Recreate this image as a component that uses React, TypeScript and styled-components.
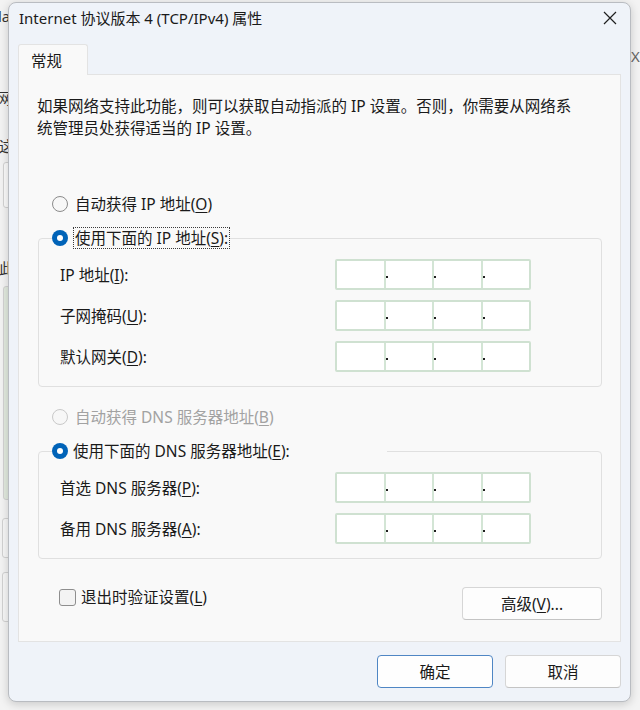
import React from "react";
import styled, { createGlobalStyle, css } from "styled-components";

const Global = createGlobalStyle`
  html, body { margin: 0; padding: 0; }
  body {
    width: 640px;
    height: 710px;
    overflow: hidden;
    background: #e6e6e6;
    font-family: "Noto Sans", "Noto Sans CJK SC", sans-serif;
    color: #1a1a1a;
  }
  * { box-sizing: border-box; }
`;

const Desktop = styled.div`
  position: relative;
  width: 640px;
  height: 710px;
  overflow: hidden;
  background: #ececec;
`;

/* ---------- window behind the dialog (only slivers visible) ---------- */
const BackWindow = styled.div`
  position: absolute;
  left: -400px;
  top: 0;
  width: 1100px;
  height: 710px;
  background: #f3f3f3;
  border-right: 1px solid #cfcfcf;
`;

const BackText = styled.span<{ $x: number; $y: number; $c?: string }>`
  position: absolute;
  left: ${(p) => p.$x}px;
  top: ${(p) => p.$y}px;
  font-size: 15px;
  line-height: 20px;
  color: ${(p) => p.$c ?? "#333"};
  white-space: nowrap;
`;

const BackPanel = styled.div<{ $x: number; $y: number; $w: number; $h: number; $bg: string }>`
  position: absolute;
  left: ${(p) => p.$x}px;
  top: ${(p) => p.$y}px;
  width: ${(p) => p.$w}px;
  height: ${(p) => p.$h}px;
  background: ${(p) => p.$bg};
  border: 1px solid #d2d2d2;
  border-radius: 3px;
`;

/* ---------- dialog ---------- */
const Dialog = styled.div`
  position: absolute;
  left: 8px;
  top: 2px;
  width: 623px;
  height: 700px;
  display: flex;
  flex-direction: column;
  background: #eff3f9;
  border: 1px solid #b9bcc1;
  border-radius: 8px;
  box-shadow: 0 2px 10px rgba(0, 0, 0, 0.18);
`;

const TitleBar = styled.div`
  height: 30px;
  display: flex;
  align-items: center;
  justify-content: space-between;
  padding: 0 13px 0 10px;
`;

const Title = styled.div`
  font-size: 15px;
  line-height: 22px;
  color: #1a1a1a;
`;

const TabStrip = styled.div`
  display: flex;
  margin-top: 11px;
  padding-left: 9px;
`;

const Tab = styled.div`
  position: relative;
  z-index: 1;
  width: 70px;
  height: 31px;
  margin-bottom: -1px;
  padding-left: 12px;
  display: flex;
  align-items: center;
  font-size: 15.5px;
  background: #f9f9f9;
  border: 1px solid #e3e3e3;
  border-bottom: none;
  border-radius: 3px 3px 0 0;
`;

const Panel = styled.div`
  margin: 0 9px;
  padding: 20px 18px 21px 19px;
  display: flex;
  flex-direction: column;
  background: #f9f9f9;
  border: 1px solid #e3e3e3;
`;

const Description = styled.p`
  margin: 0 0 0 -1px;
  font-size: 15.5px;
  line-height: 22px;
`;

const Line = styled.span`
  display: block;
  white-space: nowrap;
`;

const RadioRow = styled.div<{ $top: number }>`
  display: flex;
  align-items: center;
  gap: 7px;
  height: 22px;
  padding-left: 14px;
  margin-top: ${(p) => p.$top}px;
`;

const RadioDot = styled.span<{ $checked?: boolean; $disabled?: boolean }>`
  position: relative;
  flex: none;
  width: 16px;
  height: 16px;
  border-radius: 50%;
  ${(p) =>
    p.$checked
      ? css`
          background: #0063b8;
          &::after {
            content: "";
            position: absolute;
            left: 5px;
            top: 5px;
            width: 6px;
            height: 6px;
            border-radius: 50%;
            background: #fff;
          }
        `
      : css`
          background: #f7f7f7;
          border: 1px solid ${p.$disabled ? "#c9c9c9" : "#8b8b8b"};
        `}
`;

const Label = styled.span<{ $disabled?: boolean; $focused?: boolean }>`
  font-size: 15.5px;
  line-height: 20px;
  white-space: nowrap;
  color: ${(p) => (p.$disabled ? "#a2a2a2" : "#1a1a1a")};
  ${(p) =>
    p.$focused &&
    css`
      border: 1px dotted #3a3a3a;
      padding: 0 1px;
      line-height: 20px;
    `}
`;

const Key = styled.u`
  text-decoration: underline;
  text-underline-offset: 2px;
  text-decoration-thickness: 1px;
`;

const Group = styled.fieldset<{ $top: number }>`
  margin: ${(p) => p.$top}px 0 0 0;
  padding: 10px 0 14px 0;
  border: 1px solid #e0e0e0;
  border-radius: 4px;
  min-width: 0;
`;

const GroupLegend = styled.legend<{ $width: number }>`
  margin-left: 13px;
  padding: 0;
  width: ${(p) => p.$width}px;
  height: 22px;
  display: flex;
  align-items: center;
  gap: 5px;
`;

const FieldGrid = styled.div`
  display: grid;
  grid-template-columns: 275px 196px;
  grid-auto-rows: 31px;
  row-gap: 10px;
  align-items: center;
  padding-left: 21px;
`;

const FieldLabel = styled.span`
  font-size: 15.5px;
  line-height: 20px;
  white-space: nowrap;
`;

const IpField = styled.div`
  width: 196px;
  height: 31px;
  display: flex;
  background: #fff;
  border: 2px solid #cfe1d1;
  border-radius: 2px;
`;

const Octet = styled.div<{ $first?: boolean }>`
  position: relative;
  flex: 1;
  border-left: ${(p) => (p.$first ? "none" : "2px solid #d3e5d5")};
  &::before {
    content: ${(p) => (p.$first ? "none" : '""')};
    position: absolute;
    left: 0;
    top: 15px;
    width: 2px;
    height: 2px;
    background: #1f1f1f;
  }
`;

const BottomRow = styled.div`
  margin-top: 27px;
  padding-left: 21px;
  display: flex;
  align-items: flex-start;
  justify-content: space-between;
`;

const CheckRow = styled.label`
  display: flex;
  align-items: center;
  gap: 5px;
  height: 22px;
`;

const CheckBox = styled.span`
  flex: none;
  width: 17px;
  height: 17px;
  border: 1px solid #8e8e8e;
  border-radius: 3px;
  background: #f3f3f3;
`;

const Button = styled.button<{ $w: number; $default?: boolean }>`
  width: ${(p) => p.$w}px;
  height: 33px;
  margin-top: 1px;
  font-family: inherit;
  font-size: 15.5px;
  color: #1a1a1a;
  background: #fdfdfd;
  border: 1px solid #d6d6d6;
  border-bottom-color: #c4c4c4;
  border-radius: 4px;
  padding: 0;
  ${(p) =>
    p.$default &&
    css`
      border: 1px solid #4f86c4;
      background: #fefefe;
    `}
`;

const Footer = styled.div`
  display: flex;
  justify-content: flex-end;
  gap: 12px;
  padding: 12px 9px 0 0;
`;

const CloseIcon = () => (
  <svg width="14" height="14" viewBox="0 0 14 14" aria-hidden>
    <path d="M1 1 L13 13 M13 1 L1 13" stroke="#1f1f1f" strokeWidth="1.2" fill="none" />
  </svg>
);

const Ip = () => (
  <IpField>
    <Octet $first />
    <Octet />
    <Octet />
    <Octet />
  </IpField>
);

export default function App() {
  return (
    <Desktop>
      <Global />
      <BackWindow>
        <BackText $x={398} $y={6}>la</BackText>
        <BackText $x={397} $y={88}>网</BackText>
        <BackText $x={399} $y={136}>这</BackText>
        <BackPanel $x={403} $y={162} $w={60} $h={46} $bg="#fbfbfb" />
        <BackText $x={399} $y={258}>此</BackText>
        <BackPanel $x={403} $y={286} $w={60} $h={214} $bg="#e2eadf" />
        <BackPanel $x={402} $y={518} $w={60} $h={40} $bg="#f7f7f7" />
        <BackPanel $x={402} $y={572} $w={60} $h={50} $bg="#f7f7f7" />
        <BackText $x={1031} $y={46} $c="#666">X</BackText>
      </BackWindow>

      <Dialog>
        <TitleBar>
          <Title>Internet 协议版本 4 (TCP/IPv4) 属性</Title>
          <CloseIcon />
        </TitleBar>

        <TabStrip>
          <Tab>常规</Tab>
        </TabStrip>

        <Panel>
          <Description>
            <Line>如果网络支持此功能，则可以获取自动指派的 IP 设置。否则，你需要从网络系</Line>
            <Line>统管理员处获得适当的 IP 设置。</Line>
          </Description>

          <RadioRow $top={54}>
            <RadioDot />
            <Label>
              自动获得 IP 地址(<Key>O</Key>)
            </Label>
          </RadioRow>

          <Group $top={12}>
            <GroupLegend $width={178}>
              <RadioDot $checked />
              <Label $focused>
                使用下面的 IP 地址(<Key>S</Key>):
              </Label>
            </GroupLegend>
            <FieldGrid>
              <FieldLabel>
                IP 地址(<Key>I</Key>):
              </FieldLabel>
              <Ip />
              <FieldLabel>
                子网掩码(<Key>U</Key>):
              </FieldLabel>
              <Ip />
              <FieldLabel>
                默认网关(<Key>D</Key>):
              </FieldLabel>
              <Ip />
            </FieldGrid>
          </Group>

          <RadioRow $top={19}>
            <RadioDot $disabled />
            <Label $disabled>
              自动获得 DNS 服务器地址(<Key>B</Key>)
            </Label>
          </RadioRow>

          <Group $top={12}>
            <GroupLegend $width={335}>
              <RadioDot $checked />
              <Label>
                使用下面的 DNS 服务器地址(<Key>E</Key>):
              </Label>
            </GroupLegend>
            <FieldGrid>
              <FieldLabel>
                首选 DNS 服务器(<Key>P</Key>):
              </FieldLabel>
              <Ip />
              <FieldLabel>
                备用 DNS 服务器(<Key>A</Key>):
              </FieldLabel>
              <Ip />
            </FieldGrid>
          </Group>

          <BottomRow>
            <CheckRow>
              <CheckBox />
              <Label>
                退出时验证设置(<Key>L</Key>)
              </Label>
            </CheckRow>
            <Button $w={140}>
              高级(<Key>V</Key>)...
            </Button>
          </BottomRow>
        </Panel>

        <Footer>
          <Button $w={116} $default>
            确定
          </Button>
          <Button $w={116}>取消</Button>
        </Footer>
      </Dialog>
    </Desktop>
  );
}
